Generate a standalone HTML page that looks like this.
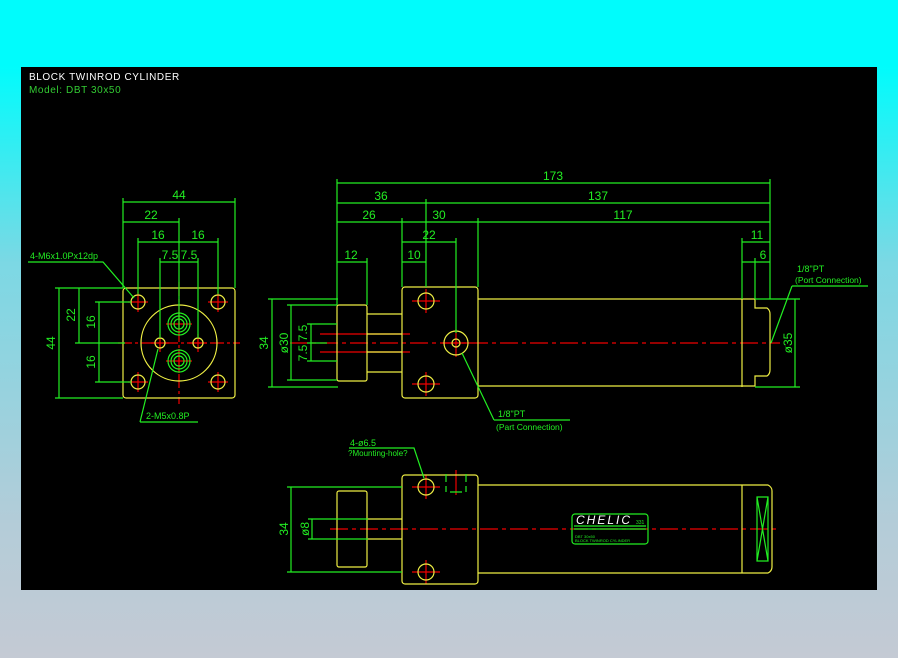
<!DOCTYPE html>
<html><head><meta charset="utf-8"><style>
html,body{margin:0;padding:0}
body{width:898px;height:658px;background:linear-gradient(#00fcfc 0%,#00fcfc 10%,#7cd8e4 40%,#b4ccd8 80%,#c4cad4 100%);position:relative;overflow:hidden}
svg{position:absolute;left:0;top:0}
text{font-family:"Liberation Sans",sans-serif}
</style></head><body>
<svg width="898" height="658" viewBox="0 0 898 658">
<rect x="21" y="67" width="856" height="523" fill="#000"/>
<text x="29" y="80" fill="#fff" font-size="10" letter-spacing="0.6">BLOCK TWINROD CYLINDER</text>
<text x="29" y="93" fill="#3c3" font-size="10" letter-spacing="0.6">Model: DBT 30x50</text>

<g stroke="#e00" stroke-width="1.2" fill="none">
<line x1="118" y1="343" x2="240" y2="343" stroke-dasharray="14 3 3 3"/>
<line x1="179" y1="282" x2="179" y2="404" stroke-dasharray="14 3 3 3"/>
<line x1="290" y1="343" x2="780" y2="343" stroke-dasharray="18 4 4 4"/>
<line x1="330" y1="529" x2="776" y2="529" stroke-dasharray="18 4 4 4"/>
<path d="M128 302h20M138 292v20M208 302h20M218 292v20M128 382h20M138 372v20M208 382h20M218 372v20M166 324h26M179 312v24M166 361h26M179 349v24M151 343h18M160 334v18M189 343h18M198 334v18"/>
<path d="M412 301h28M426 289v24M412 384h28M426 372v24M442 343h28M456 329v28M320 334h90M320 352h90"/>
<path d="M412 487h28M426 475v24M412 572h28M426 560v24M456 470v25"/>
</g>

<g stroke="#ee4" stroke-width="1.2" fill="none">
<rect x="123" y="288" width="112" height="110" rx="3"/>
<circle cx="179" cy="343" r="38"/>
<circle cx="138" cy="302" r="7"/><circle cx="218" cy="302" r="7"/>
<circle cx="138" cy="382" r="7"/><circle cx="218" cy="382" r="7"/>
<circle cx="160" cy="343" r="5"/><circle cx="198" cy="343" r="5"/>
<rect x="337" y="305" width="30" height="76" rx="2"/>
<path d="M367 314h35M367 334h35M367 352h35M367 372h35"/>
<rect x="402" y="287" width="76" height="111" rx="3"/>
<circle cx="426" cy="301" r="8"/><circle cx="426" cy="384" r="8"/>
<circle cx="456" cy="343" r="12"/><circle cx="456" cy="343" r="4"/>
<path d="M478 299H755v9h12q3 2 3 6v56q0 4-3 6h-12v10H478M742 299v88"/>
<rect x="337" y="491" width="30" height="76" rx="2"/>
<path d="M367 519h35M367 539h35"/>
<rect x="402" y="475" width="76" height="109" rx="3"/>
<circle cx="426" cy="487" r="8"/><circle cx="426" cy="572" r="8"/>
<path d="M478 485H768q4 2 4 6v76q0 4-4 6H478M742 485v88"/>
</g>

<g stroke="#2e2" stroke-width="1.2" fill="none">
<circle cx="179" cy="324" r="11"/><circle cx="179" cy="324" r="8"/><circle cx="179" cy="324" r="5"/>
<circle cx="179" cy="361" r="11"/><circle cx="179" cy="361" r="8"/><circle cx="179" cy="361" r="5"/>
<path d="M123 202h112M123 222h56M138 242h80M160 262h38"/>
<path d="M123 198v90M235 198v90M179 218v110M138 238v56M218 238v56M160 258v80M198 258v80"/>
<path d="M59 288v110M79 288v55M99 302v80"/>
<path d="M55 288h68M75 343h50M95 302h36M95 382h36M55 398h68"/>
<path d="M28 262h75L134 298M140 422h58M140 422L158 349"/>
<path d="M337 183h433M337 203h433M337 222h433M402 242h54M337 262h30M402 262h24M742 242h28M742 262h28"/>
<path d="M337 179v126M402 218v69M426 199v88M478 218v69M456 238v95M367 258v47M770 179v120M742 238v61M755 258v41"/>
<path d="M272 299v88M291 305v75M311 324v37M268 299h70M268 387h70M287 305h50M287 380h50M307 324h30M307 343h20M307 361h30"/>
<path d="M795 299v88M755 299h45M755 387h45M792 286h76M792 286L771 343M570 420h-76M494 420L462 353"/>
<path d="M291 487v85M287 487h115M287 572h115M312 519v20M308 519h60M308 539h60"/>
<path d="M349 448h65L424 478"/>
<path d="M446 474v8M446 486v6M466 474v8M466 486v6M450 492h12"/>
<rect x="572" y="514" width="76" height="30" rx="3"/>
<path d="M574 526h72M574 529h72"/>
<path d="M757 497h11v64h-11zM757 497l11 64M768 497l-11 64"/>
</g>
<g fill="#2e2" font-size="12" text-anchor="middle">
<text x="179" y="199">44</text><text x="151" y="219">22</text>
<text x="158" y="239">16</text><text x="198" y="239">16</text>
<text x="170" y="259">7.5</text><text x="189" y="259">7.5</text>
<text x="553" y="180">173</text><text x="381" y="200">36</text><text x="598" y="200">137</text>
<text x="369" y="219">26</text><text x="439" y="219">30</text><text x="623" y="219">117</text>
<text x="429" y="239">22</text><text x="414" y="259">10</text><text x="351" y="259">12</text>
<text x="757" y="239">11</text><text x="763" y="259">6</text>
<text transform="translate(55,343) rotate(-90)">44</text>
<text transform="translate(75,315) rotate(-90)">22</text>
<text transform="translate(95,322) rotate(-90)">16</text>
<text transform="translate(95,362) rotate(-90)">16</text>
<text transform="translate(268,343) rotate(-90)">34</text>
<text transform="translate(288,343) rotate(-90)">ø30</text>
<text transform="translate(307,343) rotate(-90)">7.5 7.5</text>
<text transform="translate(792,343) rotate(-90)">ø35</text>
<text transform="translate(288,529) rotate(-90)">34</text>
<text transform="translate(309,529) rotate(-90)">ø8</text>
</g>
<g fill="#2e2" font-size="9">
<text x="30" y="259">4-M6x1.0Px12dp</text>
<text x="146" y="419">2-M5x0.8P</text>
<text x="797" y="272">1/8"PT</text>
<text x="795" y="283" font-size="8.5">(Port Connection)</text>
<text x="498" y="417">1/8"PT</text>
<text x="496" y="430" font-size="8.5">(Part Connection)</text>
<text x="350" y="446">4-ø6.5</text>
<text x="348" y="456" font-size="8">?Mounting-hole?</text>
<text x="575" y="538" font-size="4">DBT 30x50</text>
<text x="575" y="542" font-size="4">BLOCK TWINROD CYLINDER</text>
</g>
<text x="576" y="524" fill="#fff" font-size="12" font-style="italic" letter-spacing="2">CHELIC</text>
<text x="636" y="524" fill="#2e2" font-size="5">331</text>
</svg>
</body></html>
